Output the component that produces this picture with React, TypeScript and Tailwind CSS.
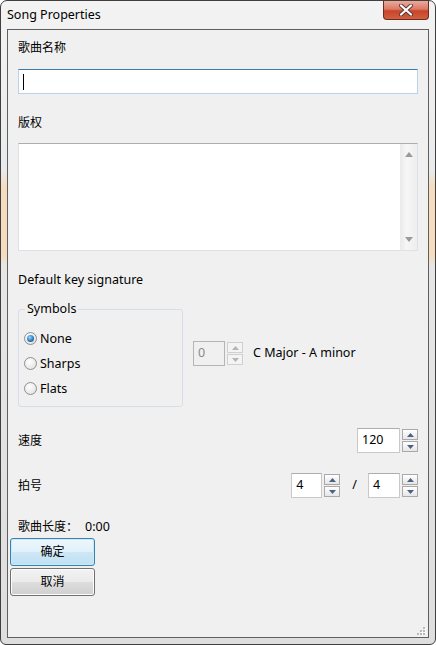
import React from "react";

const font = "font-['Noto_Sans','Noto_Sans_CJK_SC',sans-serif]";

function ArrowBtn({ up, disabled }: { up?: boolean; disabled?: boolean }) {
  return (
    <div
      className={`h-[11px] w-[16px] flex items-center justify-center border ${
        disabled
          ? "border-[#d0d0d0] bg-[#f4f4f4]"
          : "border-[#a9a9a9] bg-[linear-gradient(180deg,#ffffff,#e6e6e6)]"
      }`}
    >
      <svg width="7" height="4" viewBox="0 0 7 4">
        {up ? (
          <path d="M0 4 L3.5 0 L7 4 Z" fill={disabled ? "#b4b4b4" : "#4d6185"} />
        ) : (
          <path d="M0 0 L3.5 4 L7 0 Z" fill={disabled ? "#b4b4b4" : "#4d6185"} />
        )}
      </svg>
    </div>
  );
}

function Spin({ value, w, disabled }: { value: string; w: string; disabled?: boolean }) {
  return (
    <div className="flex items-start gap-[2px]">
      <div
        className={`${w} h-[25px] flex items-center pl-[4px] text-[12.5px] border ${
          disabled
            ? "border-[#b5b5b5] bg-[#f0f0f0] text-[#8a8a8a]"
            : "border-[#c9c9c9] border-t-[#abadb3] bg-white text-black"
        }`}
      >
        {value}
      </div>
      <div className="flex flex-col gap-[1px] pt-[1px]">
        <ArrowBtn up disabled={disabled} />
        <ArrowBtn disabled={disabled} />
      </div>
    </div>
  );
}

function Radio({ label, checked }: { label: string; checked?: boolean }) {
  return (
    <div className="h-[25px] flex items-center gap-[3px]">
      <div className="w-[13px] h-[13px] rounded-full border border-[#8e8f8f] bg-[radial-gradient(circle_at_40%_35%,#ffffff,#dcdcdc)] flex items-center justify-center">
        {checked && (
          <div className="w-[7px] h-[7px] rounded-full bg-[radial-gradient(circle_at_40%_35%,#9fd6ff,#2a7cc0_55%,#17456f)]" />
        )}
      </div>
      <span className="text-[12.5px] leading-[16px]">{label}</span>
    </div>
  );
}

export default function App() {
  return (
    <div
      className={`${font} w-[436px] h-[645px] flex flex-col rounded-t-[7px] rounded-b-[6px] border border-[#3f3f3f] px-[6px] pb-[6px] text-black bg-[linear-gradient(180deg,#f3f3f3_0px,#e9eaeb_170px,#f6dcbf_185px,#f6dcbf_255px,#e6e6e6_265px,#dedede_100%)]`}
    >
      {/* title bar */}
      <div className="h-[28px] flex items-start justify-between">
        <span className="mt-[6px] text-[12.5px] leading-[16px]">Song Properties</span>
        <div className="w-[46px] h-[19px] rounded-b-[4px] border border-t-0 border-[#6b2a22] bg-[linear-gradient(180deg,#eba99b_0%,#dc7a66_45%,#c8442b_55%,#d2603f_100%)] flex items-center justify-center">
          <svg width="14" height="12" viewBox="0 0 14 12">
            <path d="M2 1.5 L12 10.5 M12 1.5 L2 10.5" stroke="#5a3530" strokeWidth="4" strokeLinecap="round" />
            <path d="M2 1.5 L12 10.5 M12 1.5 L2 10.5" stroke="#ffffff" strokeWidth="2.2" strokeLinecap="round" />
          </svg>
        </div>
      </div>

      {/* client area */}
      <div className="flex-1 flex flex-col border border-[#5f5f5f] bg-[#f0f0f0] px-[10px]">
        <div className="mt-[8px] h-[20px] flex items-center text-[12px]">歌曲名称</div>
        <div className="mt-[11px] h-[25px] border border-[#b7d2ea] border-t-[#3d7bad] bg-white flex items-center pl-[4px]">
          <div className="w-[1px] h-[16px] bg-black" />
        </div>

        <div className="mt-[19px] h-[20px] flex items-center text-[12px]">版权</div>
        <div className="mt-[10px] h-[108px] border border-[#dde2e8] border-t-[#abadb3] bg-white flex justify-end">
          <div className="w-[17px] flex flex-col items-center justify-between py-[8px] bg-[linear-gradient(90deg,#eaeaea,#f6f6f6_40%,#eeeeee)]">
            <svg width="8" height="5" viewBox="0 0 8 5">
              <path d="M0 5 L4 0 L8 5 Z" fill="#9a9a9a" />
            </svg>
            <svg width="8" height="5" viewBox="0 0 8 5">
              <path d="M0 0 L4 5 L8 0 Z" fill="#9a9a9a" />
            </svg>
          </div>
        </div>

        <div className="mt-[19px] h-[20px] flex items-center text-[12.5px]">Default key signature</div>

        <div className="mt-[19px] flex items-start">
          <div className="relative w-[165px] h-[98px] rounded-[3px] border border-[#d5dfe5] pl-[5px] pt-[16px]">
            <span className="absolute left-[6px] top-[-9px] px-[2px] bg-[#f0f0f0] text-[12.5px] leading-[16px]">
              Symbols
            </span>
            <Radio label="None" checked />
            <Radio label="Sharps" />
            <Radio label="Flats" />
          </div>
          <div className="ml-[10px] mt-[32px] flex items-center">
            <Spin value="0" w="w-[32px]" disabled />
            <span className="ml-[10px] text-[12.5px]">C Major - A minor</span>
          </div>
        </div>

        <div className="mt-[21px] flex items-center justify-between">
          <span className="text-[12px]">速度</span>
          <Spin value="120" w="w-[43px]" />
        </div>

        <div className="mt-[20px] flex items-center">
          <span className="text-[12px]">拍号</span>
          <div className="ml-auto flex items-center">
            <Spin value="4" w="w-[31px]" />
            <span className="ml-[12px] mr-[11px] text-[12.5px]">/</span>
            <Spin value="4" w="w-[32px]" />
          </div>
        </div>

        <div className="mt-[19px] h-[20px] flex items-center text-[12px] gap-[7px]">
          <span>歌曲长度：</span>
          <span className="text-[12.5px]">0:00</span>
        </div>

        <div className="mt-[1px] -ml-[8px] flex flex-col gap-[2px]">
          <button className="w-[85px] h-[28px] rounded-[3px] border border-[#3c7fb1] bg-[linear-gradient(180deg,#eef7fc_0%,#e1f1fa_48%,#cde7f5_52%,#bfe0f2_100%)] shadow-[inset_0_0_0_1px_#c6ecfc] text-[12px]">
            确定
          </button>
          <button className="w-[85px] h-[28px] rounded-[3px] border border-[#707070] bg-[linear-gradient(180deg,#f2f2f2_0%,#ebebeb_48%,#dddddd_52%,#cfcfcf_100%)] shadow-[inset_0_0_0_1px_#fcfcfc] text-[12px]">
            取消
          </button>
        </div>

        <div className="flex-1" />
        <div className="-mr-[8px] mb-[2px] flex justify-end">
          <svg width="9" height="8" viewBox="0 0 9 8">
            {[
              [6, 0],
              [3, 3],
              [6, 3],
              [0, 6],
              [3, 6],
              [6, 6],
            ].map(([x, y], i) => (
              <g key={i}>
                <rect x={x + 1} y={y + 1} width="2" height="2" fill="#ffffff" />
                <rect x={x} y={y} width="2" height="2" fill="#b8b8b8" />
              </g>
            ))}
          </svg>
        </div>
      </div>
    </div>
  );
}
